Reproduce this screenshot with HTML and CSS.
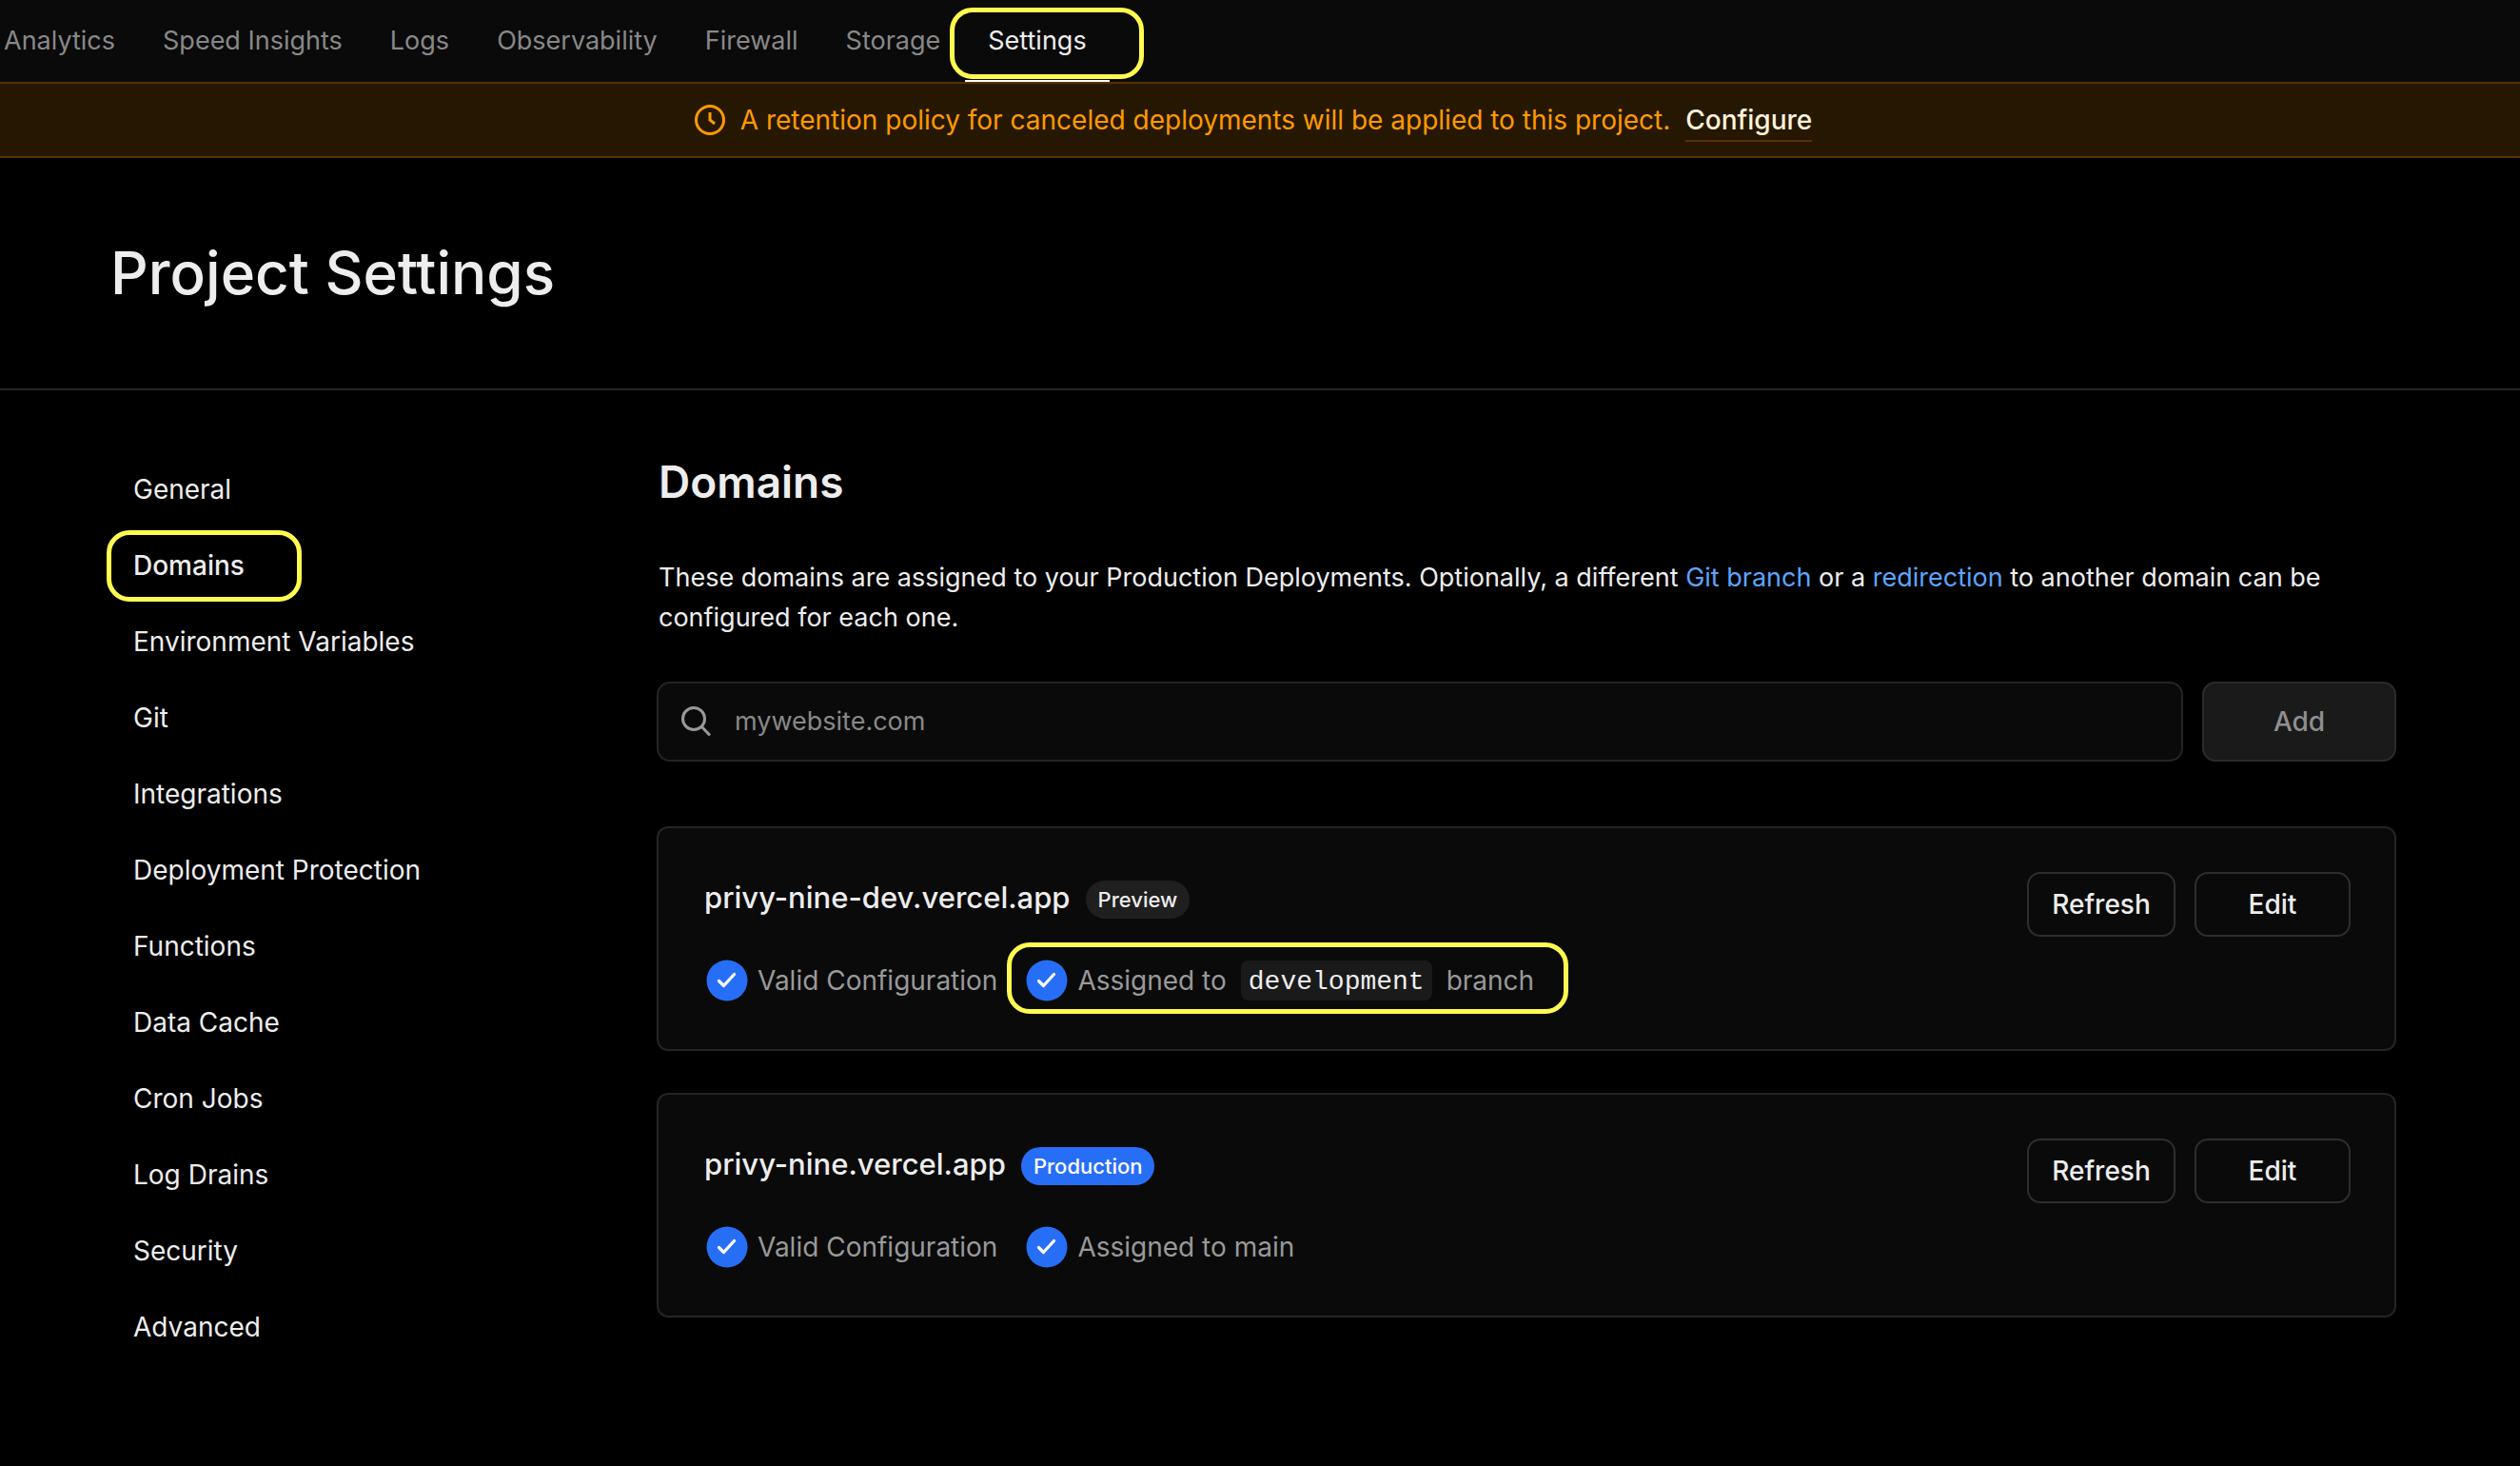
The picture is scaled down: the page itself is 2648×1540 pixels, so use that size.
FILE: index.html
```html
<!DOCTYPE html>
<html lang="en">
<head>
<meta charset="utf-8">
<meta name="viewport" content="width=device-width, initial-scale=1">
<title>Project Settings</title>
<link rel="stylesheet" href="styles.css">
</head>
<body>
<svg class="sprite" aria-hidden="true">
  <symbol id="check" viewBox="0 0 44 44">
    <circle cx="22" cy="22" r="21.500" fill="#276ef7"/>
    <path d="M13.500 22.500l5 5 11-12" fill="none" stroke="#fff" stroke-width="3.200" stroke-linecap="round" stroke-linejoin="round"/>
  </symbol>
</svg>

<nav class="tabs" aria-label="Project">
  <a class="tab" href="#">Analytics</a>
  <a class="tab" href="#">Speed Insights</a>
  <a class="tab" href="#">Logs</a>
  <a class="tab" href="#">Observability</a>
  <a class="tab" href="#">Firewall</a>
  <a class="tab" href="#">Storage</a>
  <a class="tab tab-active" href="#" aria-current="page">Settings<span class="marker marker-tab"></span></a>
</nav>

<div class="banner">
  <svg class="banner-icon" viewBox="0 0 32 32" fill="none" stroke="currentColor" stroke-width="3" aria-hidden="true">
    <circle cx="16" cy="16" r="14.500"/>
    <path d="M16 8v8l5 4"/>
  </svg>
  <span>A retention policy for canceled deployments will be applied to this project.</span>
  <a class="banner-link" href="#">Configure</a>
</div>

<header class="hero">
  <h1>Project Settings</h1>
</header>

<div class="layout">
  <nav class="side" aria-label="Settings">
    <a class="side-link" href="#">General</a>
    <a class="side-link side-active" href="#" aria-current="page">Domains<span class="marker marker-side"></span></a>
    <a class="side-link" href="#">Environment Variables</a>
    <a class="side-link" href="#">Git</a>
    <a class="side-link" href="#">Integrations</a>
    <a class="side-link" href="#">Deployment Protection</a>
    <a class="side-link" href="#">Functions</a>
    <a class="side-link" href="#">Data Cache</a>
    <a class="side-link" href="#">Cron Jobs</a>
    <a class="side-link" href="#">Log Drains</a>
    <a class="side-link" href="#">Security</a>
    <a class="side-link" href="#">Advanced</a>
  </nav>

  <main class="main">
    <h2>Domains</h2>
    <p class="intro">These domains are assigned to your Production Deployments. Optionally, a different <a href="#">Git branch</a> or a <a href="#">redirection</a> to another domain can be configured for each one.</p>

    <form class="add-form">
      <label class="search">
        <svg class="search-icon" viewBox="0 0 34 34" fill="none" stroke="currentColor" stroke-width="3" aria-hidden="true">
          <circle cx="15" cy="14" r="11.500"/>
          <path d="M23 22l9 9.500"/>
        </svg>
        <input type="text" placeholder="mywebsite.com" aria-label="Domain">
      </label>
      <button class="add" type="button" disabled>Add</button>
    </form>

    <section class="card">
      <div class="card-info">
        <div class="card-title">
          <h3>privy-nine-dev.vercel.app</h3>
          <span class="badge">Preview</span>
        </div>
        <div class="checks">
          <span class="status"><svg class="check"><use href="#check"/></svg>Valid Configuration</span>
          <span class="status"><svg class="check"><use href="#check"/></svg>Assigned to <code>development</code> branch<span class="marker marker-status"></span></span>
        </div>
      </div>
      <div class="actions">
        <button class="btn" type="button">Refresh</button>
        <button class="btn btn-edit" type="button">Edit</button>
      </div>
    </section>

    <section class="card">
      <div class="card-info">
        <div class="card-title">
          <h3>privy-nine.vercel.app</h3>
          <span class="badge badge-blue">Production</span>
        </div>
        <div class="checks">
          <span class="status"><svg class="check"><use href="#check"/></svg>Valid Configuration</span>
          <span class="status"><svg class="check"><use href="#check"/></svg>Assigned to main</span>
        </div>
      </div>
      <div class="actions">
        <button class="btn" type="button">Refresh</button>
        <button class="btn btn-edit" type="button">Edit</button>
      </div>
    </section>
  </main>
</div>
</body>
</html>
```
FILE: styles.css
```css
* {
  box-sizing: border-box;
}

body {
  margin: 0;
  background: #000;
  color: #ededed;
  font: 400 28px/42px Inter, "Liberation Sans", sans-serif;
}

a {
  color: inherit;
  text-decoration: none;
}

button,
input {
  font: inherit;
}

h1,
h2,
h3,
p {
  margin: 0;
}

.sprite {
  position: absolute;
  width: 0;
  height: 0;
}

/* Yellow call-out frames drawn over the page */
.marker {
  position: absolute;
  z-index: 1;
  height: 75px;
  border: 5px solid #fffb50;
  border-radius: 24px;
  pointer-events: none;
}

/* Top tabs */
.tabs {
  display: flex;
  gap: 50px;
  height: 86px;
  padding-left: 4px;
  background: #0a0a0a;
  color: #888;
  font-size: 27px;
  white-space: nowrap;
}

.tab {
  position: relative;
  line-height: 86px;
}

.tab-active {
  color: #ededed;
}

.tab-active::after {
  content: "";
  position: absolute;
  left: -24px;
  right: -24px;
  bottom: 0;
  height: 2px;
  background: #fff;
}

.marker-tab {
  top: 8px;
  left: -40px;
  width: 204px;
}

/* Retention banner */
.banner {
  display: flex;
  align-items: center;
  justify-content: center;
  gap: 16px;
  height: 80px;
  padding-right: 14px;
  background: #261800;
  border: solid #583100;
  border-width: 2px 0;
  color: #ff9a00;
}

.banner-icon {
  width: 32px;
  height: 32px;
}

.banner-link {
  margin-top: 2px;
  border-bottom: 2px solid #583100;
  color: #fff3db;
  font-weight: 500;
}

/* Title */
.hero {
  padding: 80px 116px;
  border-bottom: 2px solid #242424;
}

h1 {
  font-size: 62px;
  line-height: 82px;
  font-weight: 500;
}

/* Settings body */
.layout {
  display: grid;
  grid-template-columns: 574px 1fr;
  padding: 64px 130px 96px 116px;
}

.side {
  display: flex;
  flex-direction: column;
  align-items: flex-start;
  padding-left: 24px;
}

.side-link {
  position: relative;
  line-height: 80px;
}

.side-active {
  font-weight: 500;
}

.marker-side {
  top: 3px;
  left: -28px;
  width: 205px;
}

.main {
  min-width: 0;
}

h2 {
  padding-left: 2px;
  font-size: 46px;
  line-height: 64px;
  font-weight: 600;
}

.intro {
  margin: 48px 0 46px;
  padding-left: 2px;
  font-size: 27px;
}

.intro a {
  color: #5ca5ff;
}

.add-form {
  display: flex;
  gap: 20px;
  margin-bottom: 68px;
}

.search {
  display: flex;
  flex: 1;
  align-items: center;
  gap: 24px;
  height: 84px;
  padding: 0 22px;
  background: #0a0a0a;
  border: 2px solid #242424;
  border-radius: 14px;
  color: #999;
}

.search-icon {
  flex: none;
  width: 34px;
  height: 34px;
}

.search input {
  flex: 1;
  min-width: 0;
  padding: 0;
  border: 0;
  outline: 0;
  background: none;
  color: #ededed;
  font-size: 27px;
}

.search input::placeholder {
  color: #888;
  opacity: 1;
}

.add {
  width: 204px;
  background: #1a1a1a;
  border: 2px solid #2b2b2b;
  border-radius: 14px;
  color: #8f8f8f;
  font-weight: 500;
}

/* Domain cards */
.card {
  display: flex;
  justify-content: space-between;
  align-items: flex-start;
  padding: 46px;
  background: #0a0a0a;
  border: 2px solid #242424;
  border-radius: 12px;
}

.card + .card {
  margin-top: 44px;
}

.card-title {
  display: flex;
  align-items: center;
  gap: 16px;
  height: 54px;
  padding-left: 2px;
}

h3 {
  font-size: 31px;
  line-height: 48px;
  font-weight: 500;
}

.badge {
  margin-top: 4px;
  padding: 0 13px;
  border-radius: 20px;
  background: #1f1f1f;
  font-size: 22px;
  line-height: 40px;
  font-weight: 500;
}

.badge-blue {
  background: #276ef7;
  color: #fff;
}

.checks {
  display: flex;
  gap: 30px;
  padding: 38px 0 4px 4px;
  color: #999;
}

.status {
  position: relative;
  display: flex;
  align-items: center;
  gap: 10px;
}

.check {
  width: 44px;
  height: 44px;
}

code {
  margin: 0 5px;
  padding: 3px 8px 0;
  border-radius: 8px;
  background: #1a1a1a;
  color: #ededed;
  font: 400 28px/39px "Liberation Mono", monospace;
}

.marker-status {
  top: -18px;
  left: -20px;
  width: 590px;
}

.actions {
  display: flex;
  gap: 20px;
}

.btn {
  width: 156px;
  height: 68px;
  padding: 0;
  background: #0a0a0a;
  border: 2px solid #2e2e2e;
  border-radius: 14px;
  color: #ededed;
  font-weight: 500;
}

.btn-edit {
  width: 164px;
}
```
